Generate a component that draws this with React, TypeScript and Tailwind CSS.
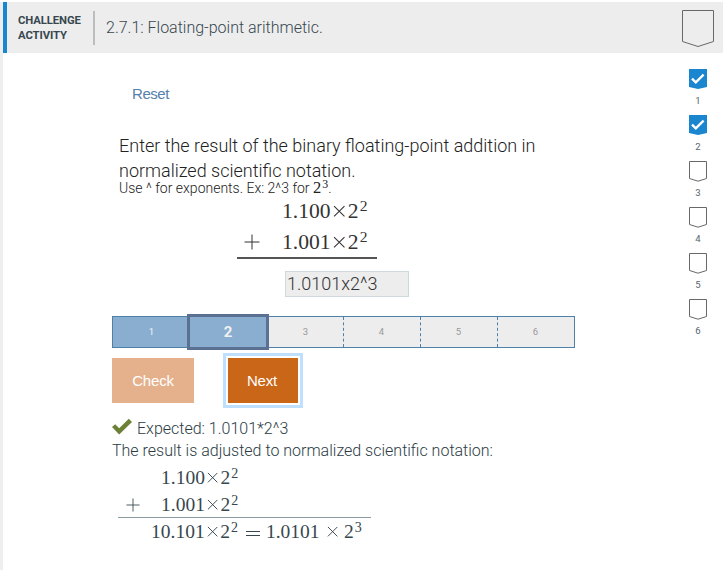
import React from 'react';

const LIGHT = "font-['Roboto','Liberation_Sans',sans-serif] font-light";

function Badge({ step, done }: { step: number; done: boolean }) {
  return (
    <div className="flex h-[46px] w-[30px] flex-col items-center">
      <svg className="block shrink-0" width="18" height="21" viewBox="0 0 18 21">
        {done ? (
          <>
            <path d="M0 0H18V18L9 20L0 18Z" fill="#1a86cf" />
            <path d="M3 9.6L6.8 13.4L14.6 5.6" fill="none" stroke="#fff" strokeWidth="2.3" />
          </>
        ) : (
          <path d="M.5 .5H17.5V17.5L9 20.2L.5 17.5Z" fill="#fff" stroke="#66686a" />
        )}
      </svg>
      <span className="mt-[5px] font-['Roboto','Liberation_Sans',sans-serif] text-[9.5px] font-normal leading-[12px] text-[#56646c]">{step}</span>
    </div>
  );
}

function Times({ wide }: { wide?: boolean }) {
  return (
    <svg className={wide ? 'ml-[.37em] mr-[.3em] inline-block h-[.58em] w-[.58em] align-[.04em]' : 'mx-[.11em] inline-block h-[.58em] w-[.58em] align-[.04em]'} viewBox="0 0 12 12">
      <path d="M1 1L11 11M11 1L1 11" stroke="currentColor" strokeWidth="1" />
    </svg>
  );
}

function Power({ exp }: { exp: string }) {
  return (
    <>
      2<span className="ml-px inline-block align-[.46em] text-[.72em] leading-[0]">{exp}</span>
    </>
  );
}

function Plus({ className }: { className: string }) {
  return (
    <svg className={className} width="16" height="16" viewBox="0 0 16 16">
      <path d="M8 .5V15.5M.5 8H15.5" stroke="currentColor" strokeWidth="1" />
    </svg>
  );
}

const MATH = "font-['Liberation_Serif',serif] whitespace-nowrap";

export default function App() {
  return (
    <div className={`h-[570px] w-[723px] overflow-hidden bg-white pt-[2px] text-[#37474f] ${LIGHT}`}>
      <div className="h-full border-l-[3px] border-[#eeeeee]">
        <header className="flex h-[51px] items-start border-l-4 border-[#1a86cf] bg-[#ededed]">
          <div className="ml-[11px] mt-[11px] w-[75px] text-[11.3px] font-bold leading-[15px] tracking-[-0.1px]">
            CHALLENGE<br />ACTIVITY
          </div>
          <div className="mt-[9px] h-[34px] w-[2px] bg-[#bdbdbd]" />
          <h1 className="ml-[11px] mt-[15px] text-[16px] leading-[22px]">2.7.1: Floating-point arithmetic.</h1>
          <svg className="ml-auto mr-[9px] mt-[8px] block" width="32" height="38" viewBox="0 0 32 38">
            <path d="M.5 .5H31.5V31.5L16 36.5L.5 31.5Z" fill="none" stroke="#66686a" />
          </svg>
        </header>

        <div className="flex justify-between">
          <main className="ml-[109px] w-[480px]">
            <a className="ml-[20px] mt-[32px] block font-['Liberation_Sans',sans-serif] text-[15px] font-normal leading-[18px] tracking-[-0.45px] text-[#5780ad]">Reset</a>

            <section className="mt-[30px] pl-[7px] text-[#222]">
              <p className="whitespace-nowrap text-[18px] leading-[25px]">
                Enter the result of the binary floating-point addition in<br />normalized scientific notation.
              </p>
              <p className="-mt-px h-[13px] whitespace-nowrap text-[14px] leading-[12px]">
                Use ^ for exponents. Ex: 2^3 for <span className={`${MATH} text-[16.5px] font-normal`}><Power exp="3" /></span>.
              </p>
              <div className={`ml-[118px] mt-px w-[140px] border-b-2 border-[#555] text-[21.6px] font-normal text-[#333] ${MATH}`}>
                <div className="h-[31px] pl-[45px] leading-[31px]">1.100<Times /><Power exp="2" /></div>
                <div className="flex h-[30px] leading-[30px]">
                  <Plus className="ml-[7px] mt-[7px]" />
                  <span className="ml-[22px]">1.001<Times /><Power exp="2" /></span>
                </div>
              </div>
              <div className="ml-[166px] mt-[12px] h-[26px] w-[124px] border border-[#cfd8dc] bg-[#ededed] pl-px text-[18px] leading-[24px] text-[#333]">1.0101x2^3</div>
            </section>

            <div className="mt-[17px] flex h-[36px] w-[463px] items-center text-[9.5px] font-normal text-[#999]">
              <div className="flex h-[32px] w-[75px] items-center justify-center border border-r-0 border-[#4f80a8] bg-[#89aed0] pl-[3px] text-white/85">1</div>
              <div className="flex h-[36px] w-[82px] items-center justify-center border-[3px] border-[#5a7194] bg-[#89aed0] text-[15px] font-bold text-[#f0f0f0]">2</div>
              <div className="grid h-[32px] flex-1 grid-cols-[75px_77px_77px_76px] border-y border-r border-[#4f80a8] bg-[#ededed]">
                {[3, 4, 5, 6].map((n) => (
                  <div key={n} className="flex items-center justify-center border-r border-dashed border-[#4f80a8] pr-px last:border-r-0">{n}</div>
                ))}
              </div>
            </div>

            <div className="mt-[8px] flex font-['Liberation_Sans',sans-serif] text-[15px] font-normal tracking-[-0.2px] text-white">
              <button className="h-[45px] w-[82px] bg-[#e4b18c] pt-px">Check</button>
              <button className="ml-[34px] h-[45px] w-[70px] bg-[#c96618] pt-px pr-[2px] outline-3 outline-offset-2 outline-[#bfdfff]">Next</button>
            </div>

            <section className="mt-[15px] text-[#2c3b43]">
              <div className="flex h-[22px] text-[16px] leading-[22px]">
                <svg className="mr-[5px]" width="20" height="18" viewBox="0 0 20 18">
                  <path d="M0 9L3.2 6.2L7.2 10.2L16.8 .8L20 4L7.2 16.5Z" fill="#6c8135" />
                </svg>
                <span>Expected: 1.0101*2^3</span>
              </div>
              <p className="h-[22px] whitespace-nowrap text-[16px] leading-[22px]">The result is adjusted to normalized scientific notation:</p>
              <div className={`ml-[6px] mt-[2px] w-[253px] text-[19.5px] font-normal text-[#37474f] ${MATH}`}>
                <div className="h-[27px] pl-[43px] leading-[27px]">1.100<Times /><Power exp="2" /></div>
                <div className="flex h-[27px] border-b border-[#8b9b9f] leading-[27px]">
                  <Plus className="ml-[8px] mt-[6px] w-[14px]" />
                  <span className="ml-[21px]">1.001<Times /><Power exp="2" /></span>
                </div>
                <div className="flex pl-[33px] leading-[27px]">
                  <span>10.101<Times /><Power exp="2" /></span>
                  <svg className="ml-[8px] mr-[6px] mt-[12px]" width="14" height="7" viewBox="0 0 14 7"><path d="M0 1.5H14M0 5.5H14" stroke="currentColor" strokeWidth="1" /></svg>
                  <span>1.0101<Times wide /><Power exp="3" /></span>
                </div>
              </div>
            </section>
          </main>

          <aside className="mr-[10px] mt-[16px] flex flex-col">
            {[1, 2, 3, 4, 5, 6].map((n) => <Badge key={n} step={n} done={n <= 2} />)}
          </aside>
        </div>
      </div>
    </div>
  );
}
